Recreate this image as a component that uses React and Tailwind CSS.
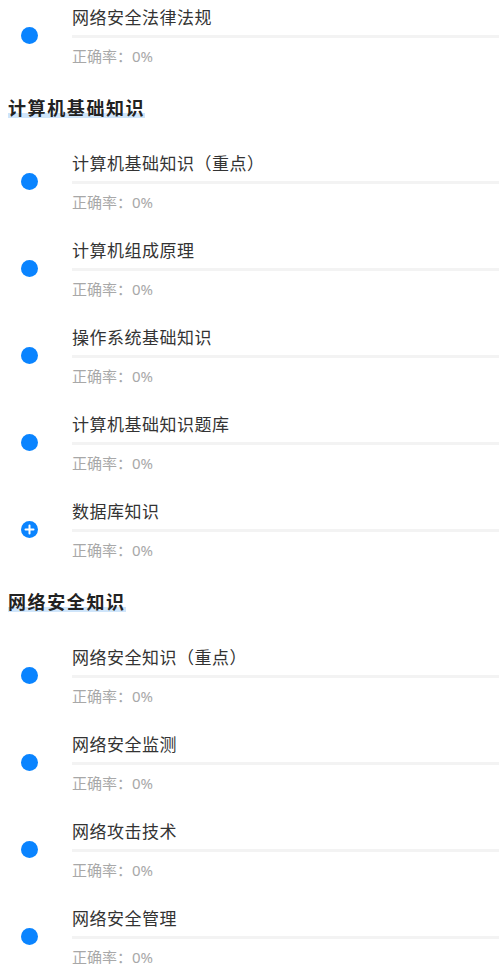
import React from 'react';

const sections = [
  { title: null, items: [{ name: '网络安全法律法规' }] },
  {
    title: '计算机基础知识',
    items: [
      { name: '计算机基础知识（重点）' },
      { name: '计算机组成原理' },
      { name: '操作系统基础知识' },
      { name: '计算机基础知识题库' },
      { name: '数据库知识', expandable: true },
    ],
  },
  {
    title: '网络安全知识',
    items: [
      { name: '网络安全知识（重点）' },
      { name: '网络安全监测' },
      { name: '网络攻击技术' },
      { name: '网络安全管理' },
    ],
  },
];

function Marker({ expandable }) {
  if (expandable) {
    return (
      <span className="flex h-[17px] w-[17px] items-center justify-center rounded-full bg-[#0a84ff]">
        <svg width="11" height="11" viewBox="0 0 11 11">
          <path d="M5.5 1.5v8M1.5 5.5h8" stroke="#fff" strokeWidth="2" strokeLinecap="round" />
        </svg>
      </span>
    );
  }
  return <span className="block h-[17px] w-[17px] rounded-full bg-[#0a84ff]" />;
}

function Item({ item }) {
  return (
    <div className="flex h-[87px]">
      <div className="w-[72px] shrink-0 pl-[21px] pt-[27px]">
        <Marker expandable={item.expandable} />
      </div>
      <div className="flex flex-1 flex-col pt-[5px]">
        <div className="h-[26px] text-[17px] leading-[26px] tracking-[0.5px] text-[#333]">{item.name}</div>
        <div className="mt-[4px] h-[3px] w-full bg-[#f3f3f3]" />
        <div className="mt-[9px] h-[18px] text-[15px] leading-[18px] text-[#a8a8a8]">正确率：0%</div>
      </div>
    </div>
  );
}

export default function App() {
  return (
    <div
      className="min-h-screen w-full bg-white"
      style={{ fontFamily: '"Noto Sans", "Noto Sans CJK SC", sans-serif' }}
    >
      {sections.map((sec, i) => (
        <div key={i}>
          {sec.title && (
            <div className="px-2 pb-[25px] pt-[10px]">
              <span className="inline-block bg-[linear-gradient(to_bottom,transparent_72%,#cfe5fa_72%,#cfe5fa_94%,transparent_94%)] text-[18px] font-bold leading-[22px] tracking-[1.6px] text-[#222]">
                {sec.title}
              </span>
            </div>
          )}
          {sec.items.map((it) => (
            <Item key={it.name} item={it} />
          ))}
        </div>
      ))}
    </div>
  );
}
